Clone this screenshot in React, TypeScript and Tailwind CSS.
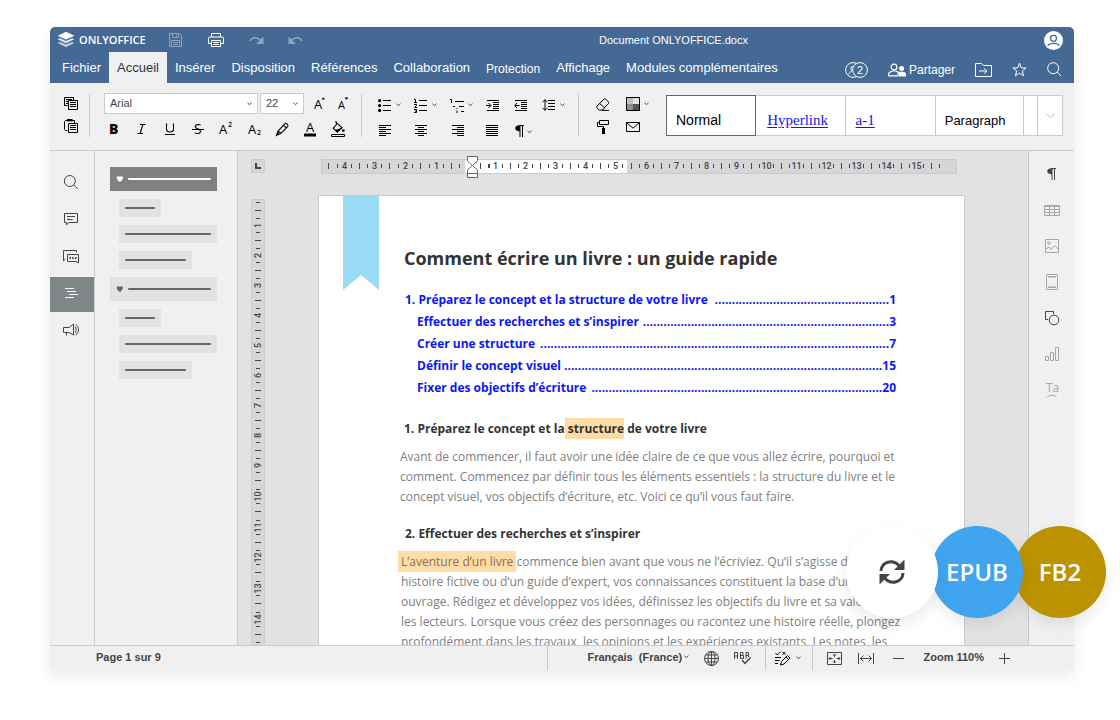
import React from "react";

type IconProps = { w: number; h: number; children: React.ReactNode; className?: string };

function Icon({ w, h, children, className }: IconProps) {
  return (
    <svg
      width={w}
      height={h}
      viewBox={`0 0 ${w} ${h}`}
      fill="none"
      stroke="currentColor"
      aria-hidden="true"
      className={"shrink-0 overflow-visible " + (className ?? "")}
    >
      {children}
    </svg>
  );
}

function Caret({ className }: { className?: string }) {
  return (
    <Icon w={5} h={4} className={className}>
      <path d="M0.5 0.8 2.5 2.6 4.5 0.8" />
    </Icon>
  );
}

function IconButton({ label, children, className }: { label: string; children: React.ReactNode; className?: string }) {
  return (
    <button type="button" aria-label={label} className={"flex items-center justify-center " + (className ?? "")}>
      {children}
    </button>
  );
}

const letter = "fill-black stroke-none font-['Open_Sans',sans-serif] leading-none";

/* ---------- Header ---------- */

function Header() {
  return (
    <header className="shrink-0 rounded-t-[5px] bg-[#446995] text-white">
      <div className="flex h-[25px] items-center justify-between pr-[11px] pl-[7px]">
        <div className="flex items-center">
          <Icon w={18} h={17}>
            <g stroke="none" fill="white">
              <path d="M9 8.6 0.6 4.8 9 0.8 17.4 4.8Z" />
              <path opacity=".85" d="M0.6 8.3 3 7.2 9 9.9 15 7.2 17.4 8.3 9 12.3Z" />
              <path opacity=".7" d="M0.6 12 3 10.9 9 13.6 15 10.9 17.4 12 9 16Z" />
            </g>
          </Icon>
          <span className="ml-1 w-[66px] font-['Open_Sans',sans-serif] text-[11px] leading-4 font-semibold">ONLYOFFICE</span>
          <IconButton label="Enregistrer" className="ml-6 text-[#8fa5bf]">
            <Icon w={13} h={14}>
              <path d="M.5 .5H10.5L12.5 2.5V13.5H.5ZM3.5 .5V4.5H9.5V.5M7.5 1.5V3.5M2.5 13.5V7.5H10.5V13.5M4 9.5H9M4 11.5H9" />
            </Icon>
          </IconButton>
          <IconButton label="Imprimer" className="ml-[26px]">
            <Icon w={16} h={14}>
              <path d="M3.5 4V.5H12.5V4M3.5 10.5H.5V5L1.5 4H14.5L15.5 5V10.5H12.5M3.5 7.5H12.5V13.5H3.5ZM5 9.5H11M5 11.5H11" />
            </Icon>
          </IconButton>
          <IconButton label="Rétablir" className="ml-[25px] text-[#8fa5bf]">
            <Icon w={15} h={10}>
              <path d="M1 6C3 2.2 8 1.4 12 5.6" strokeWidth="1.6" />
              <path d="M14.5 1.5V9H7Z" fill="currentColor" stroke="none" />
            </Icon>
          </IconButton>
          <IconButton label="Annuler" className="ml-[24px] text-[#8fa5bf]">
            <Icon w={15} h={10}>
              <path d="M14 6C12 2.2 7 1.4 3 5.6" strokeWidth="1.6" />
              <path d="M.5 1.5V9H8Z" fill="currentColor" stroke="none" />
            </Icon>
          </IconButton>
        </div>
        <h1 className="text-[11px] leading-4">Document ONLYOFFICE.docx</h1>
        <IconButton label="Profil" className="mt-[2px]">
          <Icon w={19} h={19}>
            <circle cx="9.5" cy="9.5" r="9.5" fill="white" stroke="none" />
            <circle cx="9.5" cy="7.3" r="3" stroke="#446995" strokeWidth="1.3" />
            <path d="M3.8 14.7C5.4 11.5 13.6 11.5 15.2 14.7" stroke="#446995" strokeWidth="1.3" />
          </Icon>
        </IconButton>
      </div>
      <div className="flex h-[31px] pr-3 pl-1">
        <nav className="flex items-stretch text-[13px] whitespace-nowrap">
          {["Fichier", "Accueil", "Insérer", "Disposition", "Références", "Collaboration", "Protection", "Affichage", "Modules complémentaires"].map((t) => (
            <a
              key={t}
              href={"#" + t}
              className={
                "flex items-center px-2 " +
                (t === "Accueil" ? "bg-[#f0f0f0] text-[#333]" : t === "Protection" ? "pt-[3px] text-[12px]" : "")
              }
            >
              {t}
            </a>
          ))}
        </nav>
        <div className="ml-auto flex items-center gap-5 pt-1">
          <IconButton label="Utilisateurs connectés">
            <Icon w={23} h={16}>
              <circle cx="8" cy="8" r="7.4" />
              <circle cx="15" cy="8" r="7.4" fill="#446995" />
              <path d="M7.800 4.500C5.600 4.200 5.400 7.600 6.800 8.600L5.800 10 3.200 12.200" />
              <text x="12" y="12" className="fill-white stroke-none text-[11px] leading-none">2</text>
            </Icon>
          </IconButton>
          <button type="button" className="flex items-center gap-[3px] text-[12px]">
            <Icon w={18} h={14}>
              <circle cx="6" cy="4" r="2.900" strokeWidth="1.200" />
              <path d="M.6 12.900V11C.6 9 3 8.600 4.300 8H7.700L10 9V12.900Z" strokeWidth="1.200" />
              <g fill="white" stroke="none">
                <circle cx="13.600" cy="5.600" r="2.500" />
                <path d="M11 13.500V11L9.600 9.200 12 8.800H15C17 9.200 18 9.800 18 11.400V13.500Z" />
              </g>
            </Icon>
            Partager
          </button>
          <IconButton label="Ouvrir l’emplacement">
            <Icon w={17} h={14}>
              <path d="M.5 13.500V.5H6.500L8.500 2.500H16.500V13.500ZM4 8H11.500M9 5.200 11.800 8 9 10.800" />
            </Icon>
          </IconButton>
          <IconButton label="Favori">
            <Icon w={15} h={15}>
              <path d="M7.500 1.200 9.200 5.800 14.100 6 10.300 9 11.600 13.800 7.500 11.100 3.400 13.800 4.700 9 .9 6 5.800 5.800Z" />
            </Icon>
          </IconButton>
          <IconButton label="Rechercher">
            <Icon w={15} h={15}>
              <circle cx="6.200" cy="6.200" r="5.500" />
              <path d="M10.200 10.200 14.300 14" />
            </Icon>
          </IconButton>
        </div>
      </div>
    </header>
  );
}

/* ---------- Toolbar ---------- */

function Divider() {
  return <div className="h-[43px] w-px shrink-0 bg-[#cbcbcb]" />;
}

function FontSelect({ label, value, options, className }: { label: string; value: string; options: string[]; className: string }) {
  return (
    <label className={"relative block h-[21px] " + className}>
      <select
        aria-label={label}
        defaultValue={value}
        className="block h-full w-full appearance-none border border-[#cbcbcb] bg-white pl-[5px] text-[11px] leading-[19px] text-[#444]"
      >
        {options.map((o) => (
          <option key={o}>{o}</option>
        ))}
      </select>
      <Caret className="pointer-events-none absolute top-[9px] right-[6px] text-[#444]" />
    </label>
  );
}

function Lines({ rows }: { rows: [number, number][] }) {
  return <path d={rows.map(([a, b], i) => `M${a} ${i * 2 + 0.5}H${b}`).join("")} />;
}

const formatButtons: { label: string; icon: React.ReactNode }[] = [
  { label: "Gras", icon: <text x="3" y="13" className={letter + " text-[14px] font-extrabold"}>B</text> },
  { label: "Italique", icon: <path d="M6 3.500H11.500M3.500 12.500H9M8.800 3.500 6.200 12.500" stroke="black" strokeWidth="1.100" /> },
  { label: "Souligné", icon: <path d="M4.500 2.500V8C4.500 12 11.500 12 11.500 8V2.500M3 13.500H13" stroke="black" strokeWidth="1.100" /> },
  {
    label: "Barré",
    icon: (
      <>
        <text x="4" y="13" className={letter + " text-[14px]"}>S</text>
        <path d="M2 8.500H14" stroke="black" />
      </>
    ),
  },
  {
    label: "Exposant",
    icon: (
      <>
        <text x="1" y="13" className={letter + " text-[13px]"}>A</text>
        <text x="10" y="6" className={letter + " text-[7px] font-semibold"}>2</text>
      </>
    ),
  },
  {
    label: "Indice",
    icon: (
      <>
        <text x="2" y="13" className={letter + " text-[13px]"}>A</text>
        <text x="11" y="14" className={letter + " text-[7px] font-semibold"}>2</text>
      </>
    ),
  },
  { label: "Surlignage", icon: <path d="M2.500 14.500 4 10 10.800 2.800C12 1.600 15 4 13.600 5.600L7 12.400ZM4 10 7 12.400M9.500 4.200 12.400 7M2.500 14.500 5.200 11.500" stroke="black" strokeWidth="1.100" /> },
  {
    label: "Couleur de police",
    icon: (
      <>
        <text x="4" y="11" className={letter + " text-[13px]"}>A</text>
        <path d="M2 14H14" stroke="black" strokeWidth="3" />
      </>
    ),
  },
  {
    label: "Remplissage",
    icon: (
      <>
        <path d="M7.200 2.300 12 6.800 7.400 11.200 3.200 7.200 6.400 3.500V1L5 .8" stroke="black" strokeWidth="1.100" />
        <path d="M12 6.800 7.400 11.200 5 9Z" fill="black" stroke="none" />
        <circle cx="13.300" cy="9.600" r="1.400" fill="black" stroke="none" />
        <path d="M1.500 13.500H14.500V15.500H1.500Z" stroke="black" />
      </>
    ),
  },
];

const bullets = (
  <>
    <path d="M5 1.500H13M5 6.500H13M5 11.500H13" />
    <g fill="black" stroke="none">
      <circle cx="1.600" cy="1.600" r="1.600" />
      <circle cx="1.600" cy="6.600" r="1.600" />
      <circle cx="1.600" cy="11.400" r="1.600" />
    </g>
  </>
);
const numbered = <path d="M5 1.500H13M5 6.500H13M5 11.500H13M0 .5H1.500V3.500M0 3.500H3M0 5.500H2.500V6.500L.5 8.500H3M0 10.500H2.500V13.500H0M1 12H2.500" />;
const multilevel = <path d="M5 2.500H14M9 7.500H14M11 12.500H14M0 .5H1.500V4M3 7.500H5M7 9V10M7 11.500V14" />;
const indentMore = <path d="M1 1.500H13M7 3.500H13M7 5.500H13M7 7.500H13M7 9.500H13M1 11.500H13M0 6.500H4.500M2.500 4 5 6.500 2.500 9" />;
const indentLess = <path d="M1 1.500H13M7 3.500H13M7 5.500H13M7 7.500H13M7 9.500H13M1 11.500H13M.8 6.500H5.500M3 4 .8 6.500 3 9" />;
const spacing = <path d="M3 .8V11.200M.5 3.200 3 .7 5.500 3.200M.5 8.800 3 11.300 5.500 8.800M6 1.500H13M6 4.500H13M6 7.500H13M6 10.500H13" />;
const pilcrow = (
  <>
    <path d="M5.500 .5H10M6 0V12M8.500 0V12" />
    <path d="M6 .2C-.4 -.4 -.4 6.600 6 6.200Z" fill="currentColor" stroke="none" />
  </>
);

const paragraphButtons: { label: string; icon: React.ReactNode; caret?: boolean }[] = [
  { label: "Puces", icon: bullets, caret: true },
  { label: "Numérotation", icon: numbered, caret: true },
  { label: "Liste multiniveau", icon: multilevel, caret: true },
  { label: "Augmenter le retrait", icon: indentMore },
  { label: "Réduire le retrait", icon: indentLess },
  { label: "Interligne", icon: spacing, caret: true },
  { label: "Aligner à gauche", icon: <Lines rows={[[1, 13], [1, 8], [1, 13], [1, 8], [1, 13], [1, 8]]} /> },
  { label: "Centrer", icon: <Lines rows={[[1, 13], [4, 10], [1, 13], [4, 10], [1, 13], [4, 10]]} /> },
  { label: "Aligner à droite", icon: <Lines rows={[[2, 14], [7, 14], [2, 14], [7, 14], [2, 14], [7, 14]]} /> },
  { label: "Justifier", icon: <Lines rows={[[0, 12], [0, 12], [0, 12], [0, 12], [0, 12], [0, 12]]} /> },
  { label: "Marques de paragraphe", icon: pilcrow, caret: true },
];

function Toolbar() {
  return (
    <div className="flex h-[68px] shrink-0 items-start border-b border-[#cbcbcb] bg-[#f0f0f0] pt-[11px] pr-[11px]">
      <div className="flex h-[43px] w-[39px] shrink-0 flex-col items-center justify-between pt-[3px] pl-[2px]">
        <IconButton label="Copier">
          <Icon w={14} h={13} className="text-black">
            <path d="M3.500 8.500H.5V.5H9.500V3M2 2.500H8M2 4.500H4M2 6.500H4M4.500 3.500H13.500V12.500H4.500ZM6 5.500H12M6 7.500H12M6 9.500H12" />
          </Icon>
        </IconButton>
        <IconButton label="Coller" className="pb-1">
          <Icon w={14} h={14} className="text-black">
            <path d="M3.500 11.500H1.500L.5 10.500V2.500L1.500 1.500H3M8 1.500H10.500V4M3 1H8" />
            <path d="M3 1.200H8.500" strokeWidth="2.400" />
            <path d="M4.500 4.500H13.500V13.500H4.500ZM6 6.500H12M6 8.500H12M6 10.500H12" />
          </Icon>
        </IconButton>
      </div>
      <Divider />
      <div className="w-[271px] shrink-0 pl-[10px]">
        <div className="-mt-px flex items-center pl-1">
          <FontSelect label="Police" value="Arial" options={["Arial", "Calibri", "Georgia"]} className="w-[154px]" />
          <FontSelect label="Taille" value="22" options={["22", "24", "26"]} className="ml-[2px] w-[44px]" />
          <IconButton label="Agrandir la police" className="ml-1 w-6">
            <Icon w={14} h={16}>
              <text x="1" y="13" className={letter + " text-[13px]"}>A</text>
              <path d="M8.500 3.500 10.200 1.200 12 3.500Z" fill="black" stroke="none" />
            </Icon>
          </IconButton>
          <IconButton label="Réduire la police" className="w-6">
            <Icon w={14} h={16}>
              <text x="1" y="13" className={letter + " text-[11px]"}>A</text>
              <path d="M7.500 1.500 11.500 1.500 9.500 3.800Z" fill="black" stroke="none" />
            </Icon>
          </IconButton>
        </div>
        <div className="mt-[5px] flex">
          {formatButtons.map((b) => (
            <IconButton key={b.label} label={b.label} className="h-5 w-7">
              <Icon w={16} h={16}>{b.icon}</Icon>
            </IconButton>
          ))}
        </div>
      </div>
      <Divider />
      <div className="grid w-[216px] shrink-0 grid-cols-[36px_36px_36px_28px_28px_36px] gap-y-[7px] pt-1 pl-4 text-black">
        {paragraphButtons.map((b, i) => (
          <button key={b.label} type="button" aria-label={b.label} className="flex h-[18px] items-start pt-px">
            <Icon w={14} h={14} className={i > 5 ? "mt-px" : ""}>{b.icon}</Icon>
            {b.caret && <Caret className={i > 9 ? "mt-[6px] -ml-px text-[#444]" : "mt-1 ml-1 text-[#444]"} />}
          </button>
        ))}
      </div>
      <Divider />
      <div className="grid w-[87px] shrink-0 grid-cols-[30px_30px] gap-y-[7px] pt-[2px] pl-[17px] text-black">
        <IconButton label="Effacer le style" className="h-4 justify-start">
          <Icon w={14} h={13}>
            <path d="M1 8.200 8 1C8.800 .2 13.400 3.400 12.600 5.400L6.400 12H3.400C2 11.600 .2 10 1 8.200ZM3.600 5.600 8.600 9.800M6 12.400H13" />
          </Icon>
        </IconButton>
        <button type="button" aria-label="Thème de couleurs" className="flex h-4 items-center">
          <Icon w={14} h={14}>
            <g stroke="none">
              <path d="M0 0H7V7H0Z" fill="#bdbdbd" />
              <path d="M7 0H14V7H7Z" fill="#e4e4e4" />
              <path d="M0 7H7V14H0Z" fill="#909090" />
              <path d="M7 7H14V14H7Z" fill="#555" />
            </g>
            <path d="M.5 .5H13.500V13.500H.5Z" />
          </Icon>
          <Caret className="ml-1 shrink-0 text-[#444]" />
        </button>
        <IconButton label="Copier le style" className="h-4">
          <Icon w={16} h={14} className="-ml-4">
            <path d="M4.500 .5H13.500V4.500H4.500ZM4.500 2.500H2.500V6.500H8.500V8" />
            <path d="M8.500 8V14" strokeWidth="3" />
          </Icon>
        </IconButton>
        <IconButton label="Publipostage" className="h-4 justify-start">
          <Icon w={14} h={10}>
            <path d="M.5 .5H13.500V9.500H.5ZM.8 .8 7 6.200 13.200 .8" />
          </Icon>
        </IconButton>
      </div>
      <div className="mt-px flex h-[41px] min-w-0 flex-1 border border-[#cbcbcb] bg-white whitespace-nowrap">
        <button type="button" className="-my-px -ml-px flex-[90_1_0%] border border-[#666] pt-[9px] pl-[9px] text-left text-[14px] leading-5 text-black">
          Normal
        </button>
        <button type="button" className="flex-[88_1_0%] border-r border-[#cbcbcb] pt-[9px] pl-[11px] text-left font-['Liberation_Serif',serif] text-[15px] leading-5 text-[#1414f0] underline underline-offset-2">
          Hyperlink
        </button>
        <button type="button" className="flex-[90_1_0%] border-r border-[#cbcbcb] pt-[9px] pl-[10px] text-left font-['Liberation_Serif',serif] text-[15px] leading-5 text-[#1414f0] underline underline-offset-2">
          a-1
        </button>
        <button type="button" className="flex-[89_1_0%] border-r border-[#cbcbcb] pt-[10px] pl-[9px] text-left text-[13px] leading-5 text-black">
          Paragraph
        </button>
        <div className="w-[14px] border-r border-[#cbcbcb]" />
        <IconButton label="Plus de styles" className="w-6 text-[#c0c0c0]">
          <Icon w={9} h={6}>
            <path d="M.5 .8 4.500 4.800 8.500 .8" />
          </Icon>
        </IconButton>
      </div>
    </div>
  );
}

/* ---------- Side panels ---------- */

function LeftBar() {
  const items = [
    {
      label: "Rechercher",
      icon: (
        <>
          <circle cx="6.800" cy="7" r="5.500" />
          <path d="M10.800 11 14.800 15" />
        </>
      ),
    },
    { label: "Commentaires", icon: <path d="M1.500 2.500H14.500V11.500H6L3.500 13.800V11.500H1.500ZM4 5.500H12M4 8.500H9.500" /> },
    {
      label: "Chat",
      icon: (
        <>
          <path d="M2.500 11 .5 12.800V2.500H13.500V4.500M4.500 6.500H15.500V15L13 13.500H4.500Z" />
          <path d="M6.500 10H8M9.200 10H10.700M12 10H13.500" strokeWidth="1.800" />
        </>
      ),
    },
    { label: "Navigation", icon: <path d="M2 3.500H11M4 6.500H13M6.500 9.500H15M2 12.500H11" /> },
    {
      label: "Commentaires et assistance",
      icon: (
        <path d="M.5 5.500H6L10.500 2V13L6 10.500H.5ZM3.500 10.500V13.500M12 4.500C13.500 6 13.500 9.500 12 11M12.500 2.500C16.500 4.500 16.500 11 12.500 13" />
      ),
    },
  ];
  return (
    <nav className="flex w-[45px] shrink-0 flex-col gap-[2px] border-r border-[#cbcbcb] bg-[#f0f0f0] pt-[15px]">
      {items.map((it) => (
        <IconButton
          key={it.label}
          label={it.label}
          className={"h-[35px] pr-[2px] pb-[3px] " + (it.label === "Navigation" ? "bg-[#7f8688] text-white" : "text-[#444]")}
        >
          <Icon w={16} h={16}>{it.icon}</Icon>
        </IconButton>
      ))}
    </nav>
  );
}

function Outline() {
  const rows: { cls: string; group?: boolean; active?: boolean }[] = [
    { cls: "w-[107px]", group: true, active: true },
    { cls: "w-[42px]" },
    { cls: "w-[98px]" },
    { cls: "w-[73px]" },
    { cls: "w-[107px]", group: true },
    { cls: "w-[42px]" },
    { cls: "w-[98px]" },
    { cls: "w-[73px]" },
  ];
  return (
    <aside className="flex w-[143px] shrink-0 flex-col gap-2 border-r border-[#cbcbcb] bg-[#f0f0f0] pt-4 pl-[15px]">
      {rows.map((r, i) => (
        <div
          key={i}
          className={
            "flex items-center px-[6px] " +
            r.cls +
            (r.group ? " h-6" : " ml-[9px] h-[18px]") +
            (r.active ? " bg-[#808080] text-white" : " bg-[#e2e2e2] text-[#666]")
          }
        >
          {r.group && (
            <Icon w={7} h={6} className="mr-[5px]">
              <path d="M.8 .5H6.800V2.500L5 5.500H2.600L.8 2.500Z" fill="currentColor" stroke="none" />
            </Icon>
          )}
          <div className="h-[2px] flex-1 rounded-full bg-current" />
        </div>
      ))}
    </aside>
  );
}

function RightBar() {
  const dark = "text-[#444]";
  const dim = "text-[#a6a6a6]";
  const items = [
    { label: "Paramètres du paragraphe", c: dark, icon: <g transform="translate(2 2)">{pilcrow}</g> },
    { label: "Paramètres du tableau", c: dim, icon: <path d="M.5 3.500H15.500V13.500H.5ZM0 4.300H16M.5 7.500H15.500M.5 10.500H15.500M5.500 4V13.500M10.500 4V13.500" /> },
    {
      label: "Paramètres de l’image",
      c: dim,
      icon: (
        <>
          <path d="M1.500 1.500H14.500V14.500H1.500ZM2 11 5 9 7 11.500 10.500 7.500 14.500 11.500" />
          <circle cx="5" cy="5" r="1.200" />
        </>
      ),
    },
    { label: "En-tête et pied de page", c: dim, icon: <path d="M2.500 .5H13.500V15.500H2.500ZM4 3H12M4 13H12M4 2.500H12M4 13.500H12" /> },
    {
      label: "Paramètres de la forme",
      c: dark,
      icon: (
        <>
          <path d="M4 9.500H1.500V1.500H9.500V4" />
          <circle cx="10" cy="10" r="4.800" />
        </>
      ),
    },
    { label: "Paramètres du graphique", c: dim, icon: <path d="M1.500 10.500H4.500V14.500H1.500ZM6.500 6.500H9.500V14.500H6.500ZM11.500 1.500H14.500V14.500H11.500Z" /> },
    {
      label: "Paramètres de Text Art",
      c: dim,
      icon: (
        <>
          <text x="2" y="10" className="fill-current stroke-none font-['Open_Sans',sans-serif] text-[12px] leading-none">Ta</text>
          <path d="M3 15.500C5 12.500 10.500 12.500 12.500 15.500" />
        </>
      ),
    },
  ];
  return (
    <nav className="flex w-[46px] shrink-0 flex-col border-l border-[#cbcbcb] bg-[#f0f0f0] pt-[5px]">
      {items.map((it) => (
        <IconButton key={it.label} label={it.label} className={"h-9 pl-px " + it.c}>
          <Icon w={16} h={16}>{it.icon}</Icon>
        </IconButton>
      ))}
    </nav>
  );
}

/* ---------- Rulers ---------- */

const hNumbers: [number, string][] = [
  [23, "4"], [53, "3"], [84, "2"], [115, "1"],
  ...Array.from({ length: 5 }, (_, i): [number, string] => [174 + i * 30, String(i + 1)]),
  ...Array.from({ length: 10 }, (_, i): [number, string] => [325 + i * 30, String(i + 6)]),
];
const hLong = [7, 38, 68, 99, 130, 159, 189, 219, 249, 279, ...Array.from({ length: 11 }, (_, i) => 310 + i * 30)];
const vNumbers = Array.from({ length: 14 }, (_, i) => (i < 9 ? 26 + i * 30 : 297 + Math.round((i - 9) * 30.7)));
const rulerDigits = "fill-[#444] font-['Roboto',sans-serif] text-[9px] leading-none font-medium";

function HorizontalRuler() {
  return (
    <div className="mr-[71px] ml-14 h-[15px] flex-1 border border-[#cbcbcb] bg-[#d6d6d6]">
      <svg width="634" height="13" viewBox="1 1 634 13" className="block overflow-visible" aria-hidden="true">
        <rect x="144" y="1" width="162" height="13" fill="white" />
        <g stroke="#444" strokeWidth="1">
          {hLong.map((x) => (
            <path key={x} d={`M${x + 0.5} 4V10`} />
          ))}
          {hNumbers.map(([x]) => (
            <path key={x} d={`M${x - 6.5} 5V9M${x + 7.5} 5V9`} />
          ))}
          <path d="M138.500 5V9M168.500 5V9M618.500 5V9" />
        </g>
        <g textAnchor="middle" className={rulerDigits}>
          {hNumbers.map(([x, n]) => (
            <text key={x} x={x + 0.5} y="10">{n}</text>
          ))}
        </g>
        <path d="M146.500 -2.500H156.500V2L151.500 6.500 146.500 2ZM146.500 18.500V11L151.500 6.500 156.500 11V18.500ZM146.500 14.500H156.500" fill="white" stroke="#666" />
      </svg>
    </div>
  );
}

function VerticalRuler() {
  return (
    <div className="w-[14px] shrink-0 overflow-hidden border border-b-0 border-[#cbcbcb] bg-[#d6d6d6]">
      <svg width="12" height="446" viewBox="1 1 12 446" className="block" aria-hidden="true">
        <path d="M5 3.500H9M4 11.500H10" stroke="#444" />
        {vNumbers.map((y, i) => (
          <g key={y}>
            <path d={`M5 ${y - 6.5}H9M5 ${y + 7.5}H9M4 ${y + 15.5}H10`} stroke="#444" />
            <text textAnchor="middle" transform={`translate(10 ${y + 0.5}) rotate(-90)`} className={rulerDigits}>
              {i + 1}
            </text>
          </g>
        ))}
        <path d="M5 443.500H9" stroke="#444" />
      </svg>
    </div>
  );
}

/* ---------- Document ---------- */

const toc: { title: string; dots: number; page: string; top?: boolean }[] = [
  { title: "1. Préparez le concept et la structure de votre livre", dots: 51, page: "1", top: true },
  { title: "Effectuer des recherches et s’inspirer", dots: 72, page: "3" },
  { title: "Créer une structure", dots: 102, page: "7" },
  { title: "Définir le concept visuel", dots: 93, page: "15" },
  { title: "Fixer des objectifs d’écriture", dots: 85, page: "20" },
];

function Page() {
  return (
    <article className="relative mr-[63px] ml-[53px] min-w-0 flex-1 overflow-hidden border border-b-0 border-[#cbcbcb] bg-white font-['Open_Sans',sans-serif] whitespace-nowrap text-[#333]">
      <svg width="36" height="94" viewBox="0 0 36 94" className="absolute top-0 left-6" aria-hidden="true">
        <path d="M0 0H36V94L18 79 0 94Z" fill="#9adaf3" />
      </svg>
      <div className="pl-[81px]">
        <h2 className="pt-[50px] pl-1 text-[18px] leading-6 font-bold">Comment écrire un livre : un guide rapide</h2>
        <ol className="mt-[19px] w-[496px] pl-[5px] text-[12px] leading-[22px] font-bold text-[#0a18f5]">
          {toc.map((t) => (
            <li key={t.page} className={t.top ? "" : "pl-3"}>
              <a href={"#page-" + t.page} className="flex whitespace-pre">
                <span>{t.title}</span>
                <span className="ml-[3px] min-w-0 flex-1 overflow-hidden text-right">{".".repeat(t.dots)}</span>
                <span>{t.page}</span>
              </a>
            </li>
          ))}
        </ol>
        <h3 className="mt-5 pl-1 text-[12px] leading-5 font-bold whitespace-pre">
          1. Préparez le concept et la<mark className="bg-[#ffdba6] py-[2px] text-inherit"> structure</mark> de votre livre
        </h3>
        <p className="mt-2 text-[12px] leading-5 text-[#808080]">
          Avant de commencer, il faut avoir une idée claire de ce que vous allez écrire, pourquoi et
          <br />
          comment. Commencez par définir tous les éléments essentiels : la structure du livre et le
          <br />
          concept visuel, vos objectifs d’écriture, etc. Voici ce qu’il vous faut faire.
        </p>
        <h3 className="mt-[17px] pl-[5px] text-[12px] leading-5 font-bold whitespace-pre">2. Effectuer des recherches et s’inspirer</h3>
        <p className="mt-2 pl-px text-[12px] leading-5 text-[#808080]">
          <mark className="-mx-[3px] bg-[#ffdba6] px-[3px] py-[2px] text-[#857458]">L’aventure d’un livre</mark> commence bien avant que vous ne l’écriviez. Qu’il s’agisse d’une
          <br />
          histoire fictive ou d’un guide d’expert, vos connaissances constituent la base d’un
          <br />
          ouvrage. Rédigez et développez vos idées, définissez les objectifs du livre et sa valeur pour
          <br />
          les lecteurs. Lorsque vous créez des personnages ou racontez une histoire réelle, plongez
          <br />
          profondément dans les travaux, les opinions et les expériences existants. Les notes, les
        </p>
      </div>
    </article>
  );
}

function Canvas() {
  return (
    <main className="flex min-w-0 flex-1 flex-col bg-[#e2e2e2] pl-[13px]">
      <div className="flex h-11 shrink-0 pt-2">
        <IconButton label="Type de tabulation" className="h-[14px] w-[14px] border border-[#cbcbcb] bg-[#d6d6d6] text-[#444]">
          <Icon w={6} h={6}>
            <path d="M1 0V5H6" strokeWidth="2" />
          </Icon>
        </IconButton>
        <HorizontalRuler />
      </div>
      <div className="flex min-h-0 flex-1">
        <div className="flex pt-1">
          <VerticalRuler />
        </div>
        <Page />
      </div>
    </main>
  );
}

/* ---------- Status bar ---------- */

function StatusBar() {
  const sep = "h-full w-px bg-[#cbcbcb]";
  return (
    <footer className="flex h-[25px] shrink-0 items-center border-t border-[#cbcbcb] bg-[#f0f0f0] pr-16 pl-[46px] text-[11px] font-bold whitespace-nowrap text-[#444]">
      <span className="pb-[2px]">Page 1 sur 9</span>
      <div className="ml-auto flex h-full items-center">
        <div className={sep} />
        <button type="button" className="ml-[39px] flex w-[102px] items-center justify-between pb-[2px] whitespace-pre">
          Français  (France)
          <Caret />
        </button>
        <IconButton label="Langue du document" className="ml-[15px]">
          <Icon w={15} h={15}>
            <circle cx="7.500" cy="7.500" r="7" />
            <ellipse cx="7.500" cy="7.500" rx="3.500" ry="7" />
            <path d="M7.500 .5V14.500M.5 7.500H14.500M1.800 4H13.200M1.800 11H13.200" />
          </Icon>
        </IconButton>
        <IconButton label="Vérification de l’orthographe" className="ml-[15px]">
          <Icon w={17} h={13}>
            <path d="M.5 7V.5H3.500V7M.5 4H3.500M6.500 .5H9V3.500H6.500M6.500 .5V6.500H9.500V3.500M12 .5H14.500V3.500H12M12 .5V6.500M14.500 3.500V5" />
            <path d="M8 8 11 11.500 16.500 5.500" strokeWidth="1.400" />
          </Icon>
        </IconButton>
        <div className={"ml-[14px] " + sep} />
        <IconButton label="Suivi des modifications" className="ml-[9px]">
          <Icon w={16} h={15} className="text-black">
            <path d="M.5 2 2.300 4 5.500 .8M7.500 .8 10.500 3.800M10.500 .8 7.500 3.800M0 6.500H6M0 9.500H4.500M0 12.500H3M5.500 14 6.500 10.500 12.500 4.500 15 7 9 13ZM11 6 13.500 8.500" />
          </Icon>
        </IconButton>
        <Caret className="ml-[5px]" />
        <div className={"ml-[11px] " + sep} />
        <IconButton label="Ajuster à la page" className="ml-[14px]">
          <Icon w={15} h={13}>
            <path d="M.5 .5H14.500V12.500H.5ZM7.500 2V5M6 3.500 7.500 2 9 3.500M7.500 8V11M6 9.500 7.500 11 9 9.500M2 6.500H5.500M3.500 5 2 6.500 3.500 8M9.500 6.500H13M11.500 5 13 6.500 11.500 8" />
          </Icon>
        </IconButton>
        <IconButton label="Ajuster à la largeur" className="ml-4">
          <Icon w={16} h={11}>
            <path d="M.5 0V11M15.500 0V11M2.500 5.500H13.500M5.500 2.500 2.500 5.500 5.500 8.500M10.500 2.500 13.500 5.500 10.500 8.500" />
          </Icon>
        </IconButton>
        <IconButton label="Zoom arrière" className="ml-[19px]">
          <Icon w={11} h={11}>
            <path d="M0 5.500H11" />
          </Icon>
        </IconButton>
        <span className="ml-[19px] pb-[2px]">Zoom 110%</span>
        <IconButton label="Zoom avant" className="ml-[15px]">
          <Icon w={11} h={11}>
            <path d="M0 5.500H11M5.500 0V11" />
          </Icon>
        </IconButton>
      </div>
    </footer>
  );
}

/* ---------- Format badges ---------- */

function FormatBadges() {
  const disc = "flex h-[92px] w-[92px] items-center justify-center rounded-full shadow-[0_7px_15px_rgba(0,0,0,0.08)]";
  return (
    <div className="absolute right-[14px] bottom-[102px] flex font-['Open_Sans',sans-serif] text-[24px] font-semibold text-white">
      <div className={"relative z-20 bg-white " + disc}>
        <svg width="26" height="26" viewBox="0 0 26 26" fill="none" stroke="#444" strokeWidth="3" aria-hidden="true">
          <path d="M2 12C2.500 3 13.500 -.5 20 6.500" />
          <path d="M24 14C23.500 23 12.500 26.500 6 19.500" />
          <path d="M25.500 .5V11H15Z" fill="#444" stroke="none" />
          <path d="M.5 25.500V15H11Z" fill="#444" stroke="none" />
        </svg>
      </div>
      <div className={"relative z-10 -ml-[7px] bg-[#40a4ef] " + disc}>EPUB</div>
      <div className={"-ml-[9px] bg-[#bb9200] " + disc}>FB2</div>
    </div>
  );
}

export default function App() {
  return (
    <div className="relative h-screen min-h-[560px] bg-white pt-[27px] pr-[46px] pb-[50px] pl-[50px] font-['Liberation_Sans',Arial,sans-serif]">
      <div className="flex h-full flex-col rounded-t-[5px] shadow-[0_7px_15px_rgba(0,0,0,0.08)]">
        <Header />
        <Toolbar />
        <div className="flex min-h-0 flex-1">
          <LeftBar />
          <Outline />
          <Canvas />
          <RightBar />
        </div>
        <StatusBar />
      </div>
      <FormatBadges />
    </div>
  );
}
